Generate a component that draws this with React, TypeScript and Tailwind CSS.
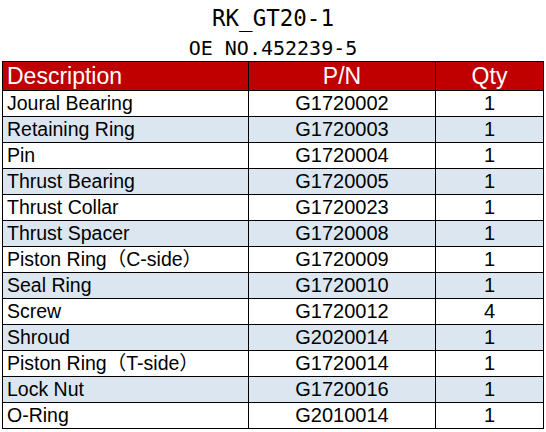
import React from "react";

const parts = [
  { desc: "Joural Bearing", pn: "G1720002", qty: "1" },
  { desc: "Retaining Ring", pn: "G1720003", qty: "1" },
  { desc: "Pin", pn: "G1720004", qty: "1" },
  { desc: "Thrust Bearing", pn: "G1720005", qty: "1" },
  { desc: "Thrust Collar", pn: "G1720023", qty: "1" },
  { desc: "Thrust Spacer", pn: "G1720008", qty: "1" },
  { desc: "Piston Ring（C-side）", pn: "G1720009", qty: "1" },
  { desc: "Seal Ring", pn: "G1720010", qty: "1" },
  { desc: "Screw", pn: "G1720012", qty: "4" },
  { desc: "Shroud", pn: "G2020014", qty: "1" },
  { desc: "Piston Ring（T-side）", pn: "G1720014", qty: "1" },
  { desc: "Lock Nut", pn: "G1720016", qty: "1" },
  { desc: "O-Ring", pn: "G2010014", qty: "1" },
];

const App = () => {
  return (
    <div className="w-[546px] h-[432px] bg-white overflow-hidden">
      <div className="ml-[2px] w-[542px] flex flex-col">
        <div className="flex flex-col items-center text-black font-['DejaVu_Sans_Mono','Noto_Sans_CJK_SC',monospace]">
          <div className="h-[36px] pt-[4px] text-[22.5px] leading-[28px]">RK_GT20-1</div>
          <div className="h-[25px] text-[20px] leading-[24px]">OE NO.452239-5</div>
        </div>

        <div className="grid grid-cols-[246px_187px_108px] border-l border-t border-black font-['Liberation_Sans','Noto_Sans_CJK_SC',sans-serif] text-black">
          <div className="h-[29px] bg-[#c00000] text-white text-[23px] leading-[28px] pl-[4px] border-r border-b border-black">
            Description
          </div>
          <div className="h-[29px] bg-[#c00000] text-white text-[23px] leading-[28px] text-center border-r border-b border-black">
            P/N
          </div>
          <div className="h-[29px] bg-[#c00000] text-white text-[23px] leading-[28px] text-center border-r border-b border-black">
            Qty
          </div>

          {parts.map((p, i) => {
            const bg = i % 2 === 1 ? "bg-[#dce6f1]" : "bg-white";
            return (
              <React.Fragment key={p.desc}>
                <div className={`${bg} h-[26px] text-[19.5px] leading-[25px] pl-[4px] whitespace-nowrap border-r border-b border-black`}>
                  {p.desc}
                </div>
                <div className={`${bg} h-[26px] text-[20px] leading-[25px] text-center border-r border-b border-black`}>
                  {p.pn}
                </div>
                <div className={`${bg} h-[26px] text-[20px] leading-[25px] text-center border-r border-b border-black`}>
                  {p.qty}
                </div>
              </React.Fragment>
            );
          })}
        </div>
      </div>
    </div>
  );
};

export default App;
